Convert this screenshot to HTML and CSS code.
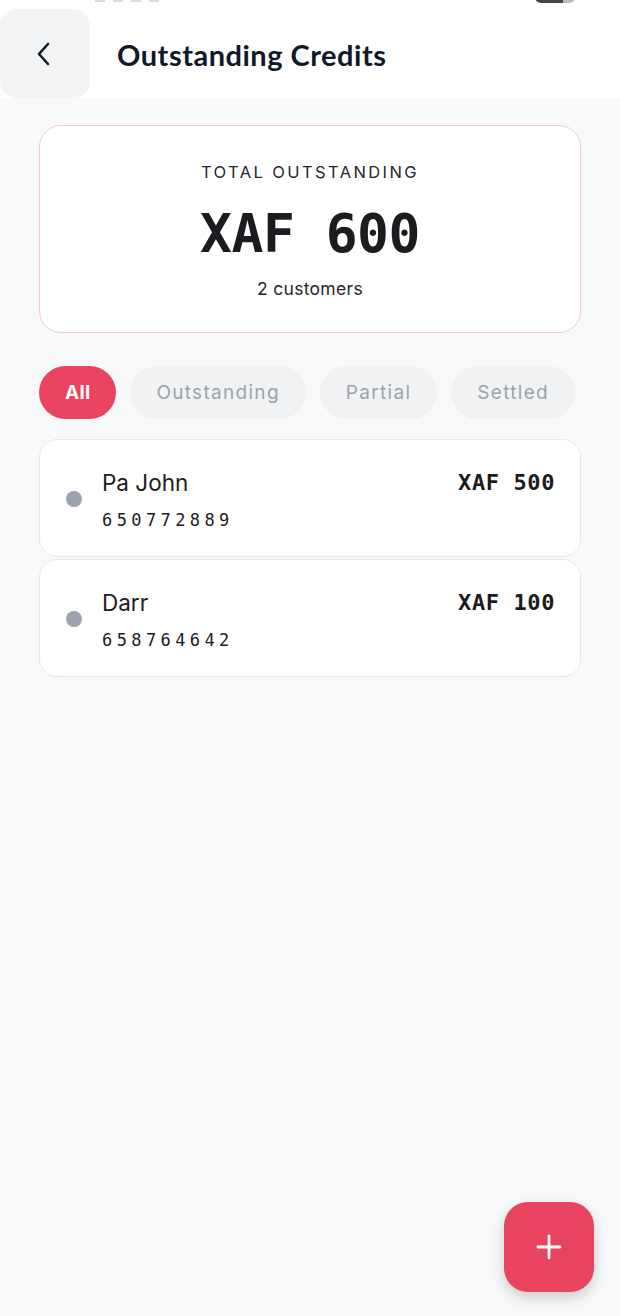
FILE: index.html
```html
<!DOCTYPE html>
<html lang="en">
<head>
	<meta charset="UTF-8">
	<title>Outstanding Credits</title>
	<link rel="stylesheet" href="styles.css">
</head>
<body>
	<div class="status"><span class="st-time"></span><span class="st-batt"></span></div>
	<div class="header">
		<div class="back">
			<svg width="18" height="26" viewBox="0 0 18 26"><path d="M13 3 L4 13 L13 23" fill="none" stroke="#111827" stroke-width="2.6" stroke-linecap="round" stroke-linejoin="round"/></svg>
		</div>
		<h1 class="title">Outstanding Credits</h1>
	</div>
	<div class="main">
		<div class="summary">
			<div class="sum-label">TOTAL OUTSTANDING</div>
			<div class="sum-amount">XAF 600</div>
			<div class="sum-count">2 customers</div>
		</div>
		<div class="chips">
			<div class="chip active">All</div>
			<div class="chip">Outstanding</div>
			<div class="chip">Partial</div>
			<div class="chip">Settled</div>
		</div>
		<div class="list">
			<div class="item">
				<span class="dot"></span>
				<div class="info">
					<div class="name">Pa John</div>
					<div class="phone">650772889</div>
				</div>
				<div class="amount">XAF 500</div>
			</div>
			<div class="item">
				<span class="dot"></span>
				<div class="info">
					<div class="name">Darr</div>
					<div class="phone">658764642</div>
				</div>
				<div class="amount">XAF 100</div>
			</div>
		</div>
	</div>
	<div class="fab">
		<svg width="26" height="26" viewBox="0 0 26 26"><path d="M13 2 V24 M2 13 H24" stroke="#fff" stroke-width="2.8" stroke-linecap="round"/></svg>
	</div>
</body>
</html>
```

FILE: styles.css
```css
* {
	margin: 0;
	padding: 0;
	box-sizing: border-box;
}
body {
	width: 620px;
	height: 1316px;
	background-color: #f8f9fb;
	font-family: Inter, "Noto Sans", sans-serif;
	color: #1c1c22;
	position: relative;
	overflow: hidden;
}
/* cut-off status bar */
.status {
	position: absolute;
	top: 0;
	left: 0;
	width: 100%;
	height: 4px;
	z-index: 5;
}
.st-time {
	position: absolute;
	left: 95px;
	top: -4px;
	width: 65px;
	height: 6px;
	background: repeating-linear-gradient(90deg, #9a9a9a 0 10px, transparent 10px 18px);
	opacity: 0.35;
}
.st-batt {
	position: absolute;
	left: 535px;
	top: -6px;
	width: 40px;
	height: 9px;
	border-radius: 0 0 6px 6px;
	background: linear-gradient(90deg, #444 0 70%, #bbb 70%);
}
.header {
	height: 98px;
	background-color: #fff;
	padding-top: 9px;
	display: flex;
	align-items: center;
}
.back {
	width: 90px;
	height: 89px;
	background-color: #f3f4f6;
	border-radius: 17px;
	display: flex;
	align-items: center;
	justify-content: center;
	padding-right: 2px;
}
.title {
	margin-left: 27px;
	margin-top: 1px;
	font-family: Lato, "Open Sans", sans-serif;
	font-weight: 700;
	font-size: 29px;
	letter-spacing: 0.5px;
	color: #111827;
}
.main {
	padding: 27px 39px 0;
}
.summary {
	height: 208px;
	background-color: #fff;
	border: 1.5px solid #f5cdcf;
	border-radius: 22px;
	text-align: center;
	padding-top: 36px;
}
.sum-label {
	font-size: 16.5px;
	letter-spacing: 2.4px;
	color: #26262c;
	line-height: 20px;
}
.sum-amount {
	margin-top: 23px;
	font-family: "DejaVu Sans Mono", "Liberation Mono", monospace;
	font-weight: 700;
	font-size: 53px;
	line-height: 58px;
	letter-spacing: -0.5px;
	color: #1c1b20;
}
.sum-count {
	margin-top: 15px;
	font-size: 17.5px;
	letter-spacing: 0.3px;
	line-height: 22px;
	color: #26262c;
}
.chips {
	display: flex;
	gap: 14px;
	margin-top: 33px;
}
.chip {
	height: 53px;
	border-radius: 27px;
	background-color: #f1f2f4;
	color: #9ca3af;
	font-size: 19px;
	letter-spacing: 1.3px;
	display: flex;
	align-items: center;
	padding: 0 26px;
}
.chip.active {
	background-color: #e8445f;
	color: #fff;
	font-weight: 700;
	letter-spacing: 0.3px;
	padding: 0 26px;
}
.list {
	margin-top: 20px;
	display: flex;
	flex-direction: column;
	gap: 2px;
}
.item {
	height: 118px;
	background-color: #fff;
	border: 1px solid #e7e8eb;
	border-radius: 18px;
	display: flex;
	align-items: flex-start;
	padding: 29px 26px 0 26px;
}
.dot {
	width: 16px;
	height: 16px;
	border-radius: 50%;
	background-color: #9ca3af;
	margin-top: 22px;
	flex-shrink: 0;
}
.info {
	flex: 1;
	margin-left: 20px;
}
.name {
	font-size: 22.5px;
	line-height: 28px;
	color: #1c1c22;
}
.phone {
	margin-top: 12px;
	font-family: "DejaVu Sans Mono", "Liberation Mono", monospace;
	font-size: 17px;
	letter-spacing: 4.4px;
	line-height: 22px;
	color: #1c1c22;
}
.amount {
	font-family: "DejaVu Sans Mono", "Liberation Mono", monospace;
	font-weight: 700;
	font-size: 22px;
	letter-spacing: 0.6px;
	line-height: 28px;
	margin-right: -1px;
	color: #1c1b20;
}
.fab {
	position: absolute;
	left: 504px;
	top: 1202px;
	width: 90px;
	height: 90px;
	border-radius: 24px;
	background-color: #e8445f;
	box-shadow: 0 6px 14px rgba(0, 0, 0, 0.18);
	display: flex;
	align-items: center;
	justify-content: center;
}
```
